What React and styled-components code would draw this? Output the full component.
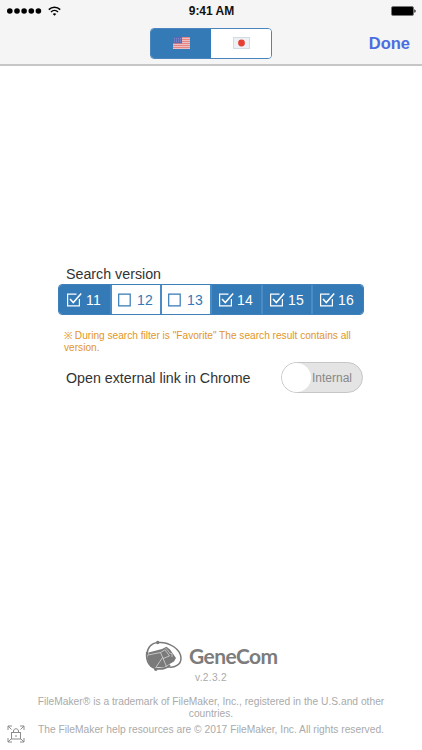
import React, { useState } from 'react'
import styled, { createGlobalStyle } from 'styled-components'

const GlobalStyle = createGlobalStyle`
  * {
    box-sizing: border-box;
  }

  body {
    margin: 0;
    background: #ffffff;
    font-family: 'Liberation Sans', Arial, sans-serif;
  }

  button {
    font-family: inherit;
    padding: 0;
    border: 0;
    background: none;
  }

  svg {
    display: block;
    flex-shrink: 0;
  }
`

const Screen = styled.div`
  display: flex;
  flex-direction: column;
  width: 422px;
  height: 750px;
  overflow: hidden;
`

const Header = styled.header`
  height: 66px;
  background: #f5f5f5;
  border-bottom: 2px solid #c6c6c6;
`

const StatusBar = styled.div`
  display: grid;
  grid-template-columns: 1fr auto 1fr;
  align-items: center;
  height: 22px;
  padding: 0 6px 0 7px;
`

const Signal = styled.div`
  display: flex;
  align-items: center;
  gap: 6px;
`

const Clock = styled.span`
  font-size: 12px;
  font-weight: bold;
  line-height: 22px;
  color: #111111;
`

const BatteryWrapper = styled.div`
  display: flex;
  justify-content: flex-end;
`

const NavBar = styled.div`
  display: grid;
  grid-template-columns: 1fr auto 1fr;
  align-items: center;
  height: 42px;
  padding: 0 12px;
`

const LanguageSwitch = styled.div`
  display: flex;
  grid-column: 2;
  width: 122px;
  height: 31px;
  border: 1px solid #4a86bd;
  border-radius: 4px;
  overflow: hidden;
`

const LanguageButton = styled.button`
  display: flex;
  flex: 1;
  align-items: center;
  justify-content: center;
  background: ${({ $active }) => ($active ? '#337ab7' : '#ffffff')};
`

const DoneButton = styled.button`
  justify-self: end;
  padding-top: 1px;
  font-size: 16.5px;
  font-weight: bold;
  color: #4a6ee0;
`

const Settings = styled.main`
  flex: 1;
  padding: 199px 58px 0;
`

const Label = styled.span`
  display: block;
  padding-left: 8px;
  font-size: 14.25px;
  line-height: 18px;
  white-space: nowrap;
  color: #333333;
`

const Versions = styled.div`
  display: grid;
  grid-template-columns: 53px 50px 50px 51px 50px 50px;
  height: 31px;
  margin-top: 1px;
  border: 1px solid #3d80ba;
  border-radius: 4px;
  overflow: hidden;
  width: 306px;
`

const VersionButton = styled.button`
  display: flex;
  align-items: center;
  gap: 2px;
  padding-left: 6px;
  font-size: 14px;
  letter-spacing: 0.2px;
  color: ${({ $checked }) => ($checked ? '#ffffff' : '#337ab7')};
  background: ${({ $checked }) => ($checked ? '#337ab7' : '#ffffff')};

  &:first-child {
    gap: 3px;
    padding-left: 7px;
  }

  &:not(:last-child) {
    border-right: 2px solid #4a8bc6;
  }
`

const Note = styled.p`
  width: 300px;
  margin: 15px 0 0;
  padding-left: 6px;
  font-size: 10.15px;
  line-height: 12px;
  color: #e29527;
`

const LinkRow = styled.div`
  display: flex;
  align-items: center;
  justify-content: space-between;
  width: 305px;
  height: 31px;
  margin-top: 8px;
`

const Toggle = styled.button`
  display: flex;
  align-items: center;
  width: 82px;
  height: 31px;
  border: 1px solid #c6c6c6;
  border-radius: 16px;
  background: #e4e4e4;
`

const Knob = styled.span`
  width: 29px;
  height: 29px;
  border-radius: 50%;
  background: #ffffff;
`

const ToggleText = styled.span`
  padding-left: 1px;
  font-size: 12px;
  color: #888888;
`

const Footer = styled.footer`
  height: 111px;
  text-align: center;
  color: #aaaaaa;
`

const Brand = styled.div`
  display: flex;
  align-items: center;
  gap: 6px;
  height: 33px;
  padding-left: 145px;
`

const BrandName = styled.span`
  font-family: 'Lato', sans-serif;
  font-size: 21px;
  font-weight: bold;
  line-height: 33px;
  letter-spacing: -0.6px;
  color: #7c7c7c;
`

const Release = styled.div`
  font-size: 10.2px;
  line-height: 12px;
  letter-spacing: 0.3px;
`

const Legal = styled.div`
  display: grid;
  grid-template-columns: 30px 362px 30px;
  padding-top: 12px;
`

const LegalText = styled.div`
  font-size: 10.25px;
  line-height: 12px;
`

const LegalLine = styled.p`
  margin: 0 0 4px;
`

const LockWrapper = styled.div`
  align-self: end;
  height: 15px;
  padding-left: 7px;
`

const WifiIcon = () => (
  <svg width="13" height="11" viewBox="0 0 13 11" fill="none" stroke="#000">
    <path d="M0.8 3.6C4 0.4 9 0.4 12.2 3.6" strokeWidth="1.5" />
    <path d="M3 6C5 4 8 4 10 6" strokeWidth="1.5" />
    <path d="M4.7 8C5.7 6.9 7.3 6.9 8.3 8L6.5 9.8Z" fill="#000" stroke="none" />
  </svg>
)

const SignalDots = () => (
  <svg width="35" height="6" viewBox="0 0 35 6">
    {[2.8, 10, 17.1, 24.3, 31.4].map((cx) => (
      <circle key={cx} cx={cx} cy="3" r="2.8" />
    ))}
  </svg>
)

const BatteryIcon = () => (
  <svg width="25" height="10" viewBox="0 0 25 10">
    <rect x="0.5" y="0.5" width="22" height="9" rx="1.5" fill="#000" stroke="#777" />
    <path d="M23.4 3.2C25 3.6 25 6.4 23.4 6.8Z" />
  </svg>
)

const UsFlag = () => (
  <svg width="17" height="12" viewBox="0 0 17 12">
    <rect width="17" height="12" fill="#f3e9ed" />
    {[0, 2, 4, 6, 8, 10].map((y) => (
      <rect key={y} y={y + 0.3} width="17" height="1" fill="#df5c58" />
    ))}
    <rect width="9" height="6.3" fill="#5967b5" />
    {[1.5, 3.5, 5.5, 7.5].map((x) => (
      <path key={x} d={`M${x} 1v4.6`} stroke="#a8b0dc" strokeWidth="0.7" strokeDasharray="0.7 1" />
    ))}
  </svg>
)

const JapanFlag = () => (
  <svg width="17" height="12" viewBox="0 0 17 12">
    <rect x="0.5" y="0.5" width="16" height="11" fill="#edf1f6" stroke="#d3dce5" />
    <circle cx="8.5" cy="6" r="3.4" fill="#e64035" />
  </svg>
)

const CheckIcon = ({ checked }) => (
  <svg width="17" height="15" viewBox="0 0 17 15" fill="none" stroke="currentColor" strokeWidth="1.2">
    {checked ? (
      <>
        <path d="M10.5 2.1H1.6V13.9H13.4V7" />
        <path d="M4 7L7.3 10.6L15.2 1.4" strokeWidth="1.5" />
      </>
    ) : (
      <path d="M0.7 2.1H12.2V13.9H0.7Z" />
    )}
  </svg>
)

const BrandLogo = () => (
  <svg width="38" height="32" viewBox="0 0 38 32">
    <path d="M3.5 12.5L17 9L21.5 6.8L25 9.5L31 18L29 21.5L18.5 27.5L5.5 27L2.5 19Z" fill="#7a7a7a" />
    <g fill="none" stroke="#7a7a7a">
      <path d="M2 15C2 8 6 3 13 2.5C24 1.5 35.5 9 36 18C36.3 24.5 29.5 28.5 22.5 26.8" strokeWidth="1.5" />
      <path d="M1.8 12C1 22 5 28 12.5 28.8C18 29.3 22 28 25 25" strokeWidth="1.8" />
    </g>
    <g fill="none" stroke="#e2e2e2" strokeWidth="0.7">
      <path d="M3 15L15.5 12.5L21.5 26.5" />
      <path d="M17.5 17.5L10.5 28" />
      <path d="M15.5 12.5L20 9.8L24.5 16L18 18.5" />
      <path d="M20.5 8.5C23.5 9 23 14 27 13.5L27 17" />
    </g>
    <circle cx="12.7" cy="2.5" r="1.7" fill="#7a7a7a" />
    <circle cx="10.8" cy="29.3" r="1.7" fill="#7a7a7a" />
  </svg>
)

const LockIcon = () => (
  <svg width="18" height="18" viewBox="0 0 18 18" fill="none" stroke="#8b8b8b" strokeWidth="1">
    <path d="M1 5V1H5M1 1L4.5 4.5M13 1H17V5M17 1L13.5 4.5M1 13V17H5M1 17L4 14M13 17H17V13M17 17L14 14" />
    <rect x="4.5" y="7.5" width="9" height="6.5" />
    <path d="M6.5 7.5V6C6.5 3 11.5 3 11.5 6V7.5M9 10V12" />
  </svg>
)

const App = () => {
  const [language, setLanguage] = useState('en')
  const [versions, setVersions] = useState({
    11: true,
    12: false,
    13: false,
    14: true,
    15: true,
    16: true,
  })

  const toggleVersion = (version) =>
    setVersions({ ...versions, [version]: !versions[version] })

  return (
    <Screen>
      <GlobalStyle />
      <Header>
        <StatusBar>
          <Signal>
            <SignalDots />
            <WifiIcon />
          </Signal>
          <Clock>9:41 AM</Clock>
          <BatteryWrapper>
            <BatteryIcon />
          </BatteryWrapper>
        </StatusBar>
        <NavBar>
          <LanguageSwitch>
            <LanguageButton $active={language === 'en'} onClick={() => setLanguage('en')}>
              <UsFlag />
            </LanguageButton>
            <LanguageButton $active={language === 'ja'} onClick={() => setLanguage('ja')}>
              <JapanFlag />
            </LanguageButton>
          </LanguageSwitch>
          <DoneButton>Done</DoneButton>
        </NavBar>
      </Header>
      <Settings>
        <Label>Search version</Label>
        <Versions>
          {Object.keys(versions).map((version) => (
            <VersionButton
              key={version}
              $checked={versions[version]}
              onClick={() => toggleVersion(version)}
            >
              <CheckIcon checked={versions[version]} />
              {version}
            </VersionButton>
          ))}
        </Versions>
        <Note>
          ※ During search filter is "Favorite" The search result contains all
          version.
        </Note>
        <LinkRow>
          <Label>Open external link in Chrome</Label>
          <Toggle>
            <Knob />
            <ToggleText>Internal</ToggleText>
          </Toggle>
        </LinkRow>
      </Settings>
      <Footer>
        <Brand>
          <BrandLogo />
          <BrandName>GeneCom</BrandName>
        </Brand>
        <Release>v.2.3.2</Release>
        <Legal>
          <LockWrapper>
            <LockIcon />
          </LockWrapper>
          <LegalText>
            <LegalLine>
              FileMaker® is a trademark of FileMaker, Inc., registered in the U.S.and other
              countries.
            </LegalLine>
            <LegalLine>
              The FileMaker help resources are © 2017 FileMaker, Inc. All rights reserved.
            </LegalLine>
          </LegalText>
        </Legal>
      </Footer>
    </Screen>
  )
}

export default App
